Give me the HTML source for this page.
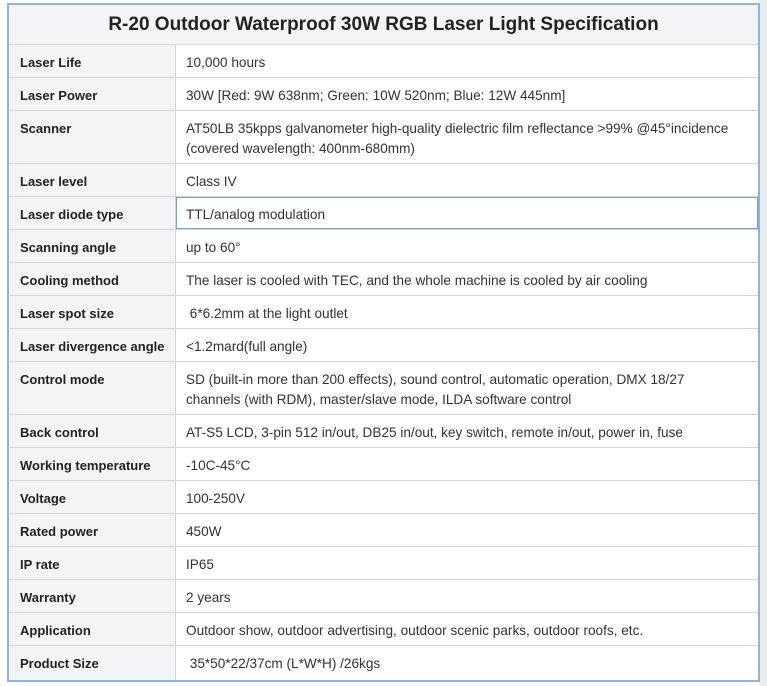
<!DOCTYPE html>
<html><head><meta charset="utf-8"><style>
html,body{margin:0;padding:0;width:767px;height:686px;overflow:hidden;background:#fff;}
body{position:relative;font-family:"Liberation Sans",sans-serif;}
.rs{position:absolute;left:759px;top:0;width:8px;height:686px;background:#e9ecf0;}
.wrap{position:absolute;left:7px;top:3px;width:749px;height:675px;border:2px solid #8fb3db;background:#fff;}
.row{position:absolute;left:0;width:749px;border-bottom:1px solid #d3d5da;box-sizing:border-box;}
.l{position:absolute;left:0;top:0;bottom:0;width:167px;background:#f3f4f8;border-right:1px solid #d3d5da;box-sizing:border-box;padding:9px 0 0 11px;font-weight:bold;font-size:13px;color:#222;line-height:18px;}
.v{position:absolute;left:167px;top:0;right:0;bottom:0;padding:8px 0 0 10px;font-size:13.6px;color:#333;line-height:20px;}
.title{position:absolute;left:0;top:0;width:749px;height:40px;background:#f3f4f8;border-bottom:1px solid #d3d5da;box-sizing:border-box;text-align:center;font-weight:bold;font-size:19px;line-height:40px;color:#222;}
.hl{border:1px solid #6aa3d5;}
</style></head><body>
<div class="rs"></div>
<div class="wrap">
<div class="title">R-20 Outdoor Waterproof 30W RGB Laser Light Specification</div>
<div class="row" style="top:40px;height:33px"><div class="l">Laser Life</div><div class="v">10,000 hours</div></div>
<div class="row" style="top:73px;height:33px"><div class="l">Laser Power</div><div class="v">30W [Red: 9W 638nm; Green: 10W 520nm; Blue: 12W 445nm]</div></div>
<div class="row" style="top:106px;height:53px"><div class="l">Scanner</div><div class="v">AT50LB 35kpps galvanometer high-quality dielectric film reflectance &gt;99% @45°incidence<br>(covered wavelength: 400nm-680mm)</div></div>
<div class="row" style="top:159px;height:33px"><div class="l">Laser level</div><div class="v">Class IV</div></div>
<div class="row" style="top:192px;height:33px"><div class="l">Laser diode type</div><div class="v hl" style="padding:7px 0 0 9px;">TTL/analog modulation</div></div>
<div class="row" style="top:225px;height:33px"><div class="l">Scanning angle</div><div class="v">up to 60°</div></div>
<div class="row" style="top:258px;height:33px"><div class="l">Cooling method</div><div class="v">The laser is cooled with TEC, and the whole machine is cooled by air cooling</div></div>
<div class="row" style="top:291px;height:33px"><div class="l">Laser spot size</div><div class="v">&nbsp;6*6.2mm at the light outlet</div></div>
<div class="row" style="top:324px;height:33px"><div class="l">Laser divergence angle</div><div class="v">&lt;1.2mard(full angle)</div></div>
<div class="row" style="top:357px;height:53px"><div class="l">Control mode</div><div class="v">SD (built-in more than 200 effects), sound control, automatic operation, DMX 18/27<br>channels (with RDM), master/slave mode, ILDA software control</div></div>
<div class="row" style="top:410px;height:33px"><div class="l">Back control</div><div class="v">AT-S5 LCD, 3-pin 512 in/out, DB25 in/out, key switch, remote in/out, power in, fuse</div></div>
<div class="row" style="top:443px;height:33px"><div class="l">Working temperature</div><div class="v">-10C-45°C</div></div>
<div class="row" style="top:476px;height:33px"><div class="l">Voltage</div><div class="v">100-250V</div></div>
<div class="row" style="top:509px;height:33px"><div class="l">Rated power</div><div class="v">450W</div></div>
<div class="row" style="top:542px;height:33px"><div class="l">IP rate</div><div class="v">IP65</div></div>
<div class="row" style="top:575px;height:33px"><div class="l">Warranty</div><div class="v">2 years</div></div>
<div class="row" style="top:608px;height:33px"><div class="l">Application</div><div class="v">Outdoor show, outdoor advertising, outdoor scenic parks, outdoor roofs, etc.</div></div>
<div class="row" style="top:641px;height:34px;border-bottom:none"><div class="l">Product Size</div><div class="v">&nbsp;35*50*22/37cm (L*W*H) /26kgs</div></div>
</div>
</body></html>
